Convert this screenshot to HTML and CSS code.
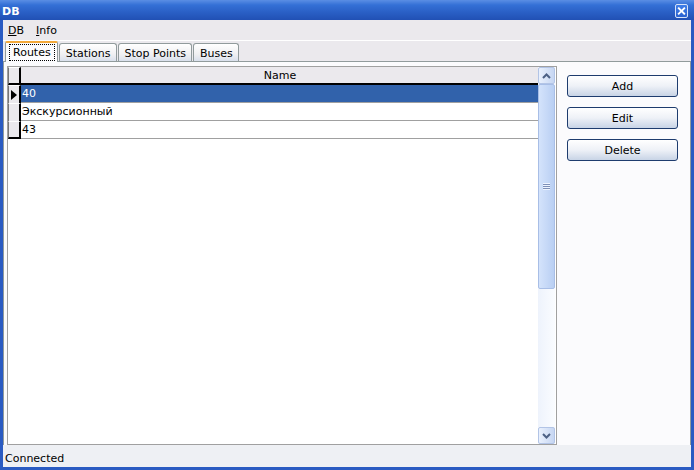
FILE: index.html
```html
<!DOCTYPE html>
<html lang="ru">
<head>
    <meta charset="UTF-8">
    <title>DB</title>
    <link rel="stylesheet" href="styles.css">
</head>
<body>
<div class="window">
    <div class="titlebar">
        <span class="title">DB</span>
        <span class="close">
            <svg width="12" height="12" viewBox="0 0 12 12">
                <path d="M3 3 L9 9 M9 3 L3 9" stroke="#fff" stroke-width="2" stroke-linecap="square"/>
            </svg>
        </span>
    </div>
    <div class="client">
        <div class="menu">
            <span class="menu-item"><u>D</u>B</span>
            <span class="menu-item"><u>I</u>nfo</span>
        </div>
        <div class="tabs">
            <div class="tab active"><span class="focus">Routes</span></div>
            <div class="tab">Stations</div>
            <div class="tab">Stop Points</div>
            <div class="tab">Buses</div>
        </div>
        <div class="panel">
            <div class="grid">
                <div class="grid-main">
                    <div class="row head">
                        <div class="rowhdr"></div>
                        <div class="cell name-col">Name</div>
                    </div>
                    <div class="row selected">
                        <div class="rowhdr"><span class="pointer"></span></div>
                        <div class="cell">40</div>
                    </div>
                    <div class="row">
                        <div class="rowhdr"></div>
                        <div class="cell">Экскурсионный</div>
                    </div>
                    <div class="row last">
                        <div class="rowhdr"></div>
                        <div class="cell">43</div>
                    </div>
                </div>
                <div class="vscroll">
                    <div class="sbtn">
                        <svg width="9" height="6" viewBox="0 0 9 6"><path d="M1 5 L4.5 1.5 L8 5" stroke="#4d6185" stroke-width="2" fill="none"/></svg>
                    </div>
                    <div class="track">
                        <div class="thumb"><span class="grip"></span></div>
                    </div>
                    <div class="sbtn">
                        <svg width="9" height="6" viewBox="0 0 9 6"><path d="M1 1 L4.5 4.5 L8 1" stroke="#4d6185" stroke-width="2" fill="none"/></svg>
                    </div>
                </div>
            </div>
            <div class="actions">
                <button class="btn">Add</button>
                <button class="btn">Edit</button>
                <button class="btn">Delete</button>
            </div>
        </div>
        <div class="status">Connected</div>
    </div>
</div>
</body>
</html>
```

FILE: styles.css
```css
body {
    margin: 0;
    font-family: "DejaVu Sans", Verdana, sans-serif;
    font-size: 11px;
    color: #000;
}

.window {
    width: 694px;
    height: 470px;
    display: flex;
    flex-direction: column;
    background: #2a5bc2;
}

/* Заголовок окна */
.titlebar {
    height: 20px;
    display: flex;
    align-items: center;
    justify-content: space-between;
    padding: 0 6px 0 2px;
    background: linear-gradient(#5a8ee4 0%, #3470d6 25%, #2a60c6 60%, #2150b4 100%);
}

.title {
    color: #fff;
    font-weight: bold;
    font-size: 11px;
    margin-top: 2px;
}

.close {
    width: 11px;
    height: 12px;
    display: flex;
    align-items: center;
    justify-content: center;
    border: 1px solid #d6e2f8;
    border-radius: 2px;
    background: linear-gradient(#3f7ee8, #2a62d0);
    margin-top: 1px;
}

.client {
    flex: 1;
    display: flex;
    flex-direction: column;
    margin: 0 3px 3px 3px;
    background: #ebe9ed;
}

/* Меню */
.menu {
    height: 20px;
    display: flex;
    align-items: center;
    gap: 12px;
    padding-left: 5px;
    border-bottom: 1px solid #fff;
}

/* Вкладки */
.tabs {
    height: 20px;
    display: flex;
    align-items: flex-end;
    padding-left: 2px;
}

.tab {
    padding: 1px 5px 0 6px;
    box-sizing: border-box;
    height: 18px;
    display: flex;
    align-items: center;
    border: 1px solid #919b9c;
    border-bottom: none;
    border-radius: 3px 3px 0 0;
    background: linear-gradient(#fff, #f0f0f2 60%, #d9e0ec);
    margin-right: 1px;
}

.tab.active {
    height: 21px;
    padding: 0 2px 0 3px;
    margin-bottom: -1px;
    position: relative;
    background: #fcfcfe;
    border-top: 2px solid #f3a93a;
    border-radius: 2px 2px 0 0;
}

.focus {
    border: 1px dotted #000;
    padding: 1px 3px;
}

/* Страница вкладки */
.panel {
    display: flex;
    background: #fbfbfd;
    border: 1px solid #919b9c;
    border-bottom: none;
    padding: 4px 0 0 3px;
    box-sizing: border-box;
    height: 384px;
}

.grid {
    width: 550px;
    height: 379px;
    box-sizing: border-box;
    border: 1px solid #a0a0a0;
    display: flex;
    background: #fff;
}

.grid-main {
    flex: 1;
}

.row {
    display: flex;
    height: 18px;
}

.rowhdr {
    width: 13px;
    background: #ebe9ed;
    border-right: 2px solid #000;
    border-top: 1px solid #fff;
    border-left: 1px solid #777;
    box-sizing: border-box;
    display: flex;
    align-items: center;
}

.row.last .rowhdr {
    border-bottom: 2px solid #000;
}

.cell {
    flex: 1;
    display: flex;
    align-items: center;
    padding-left: 1px;
    border-bottom: 1px solid #a0a0a0;
}

.row.head .cell {
    background: #ebe9ed;
    justify-content: center;
    border-bottom: 2px solid #000;
}

.row.head .rowhdr {
    border-bottom: 2px solid #000;
}

.row.selected .cell {
    background: #3162ab;
    color: #fff;
}

.pointer {
    width: 0;
    height: 0;
    border-top: 5px solid transparent;
    border-bottom: 5px solid transparent;
    border-left: 6px solid #000;
    margin-left: 2px;
}

/* Полоса прокрутки */
.vscroll {
    width: 17px;
    display: flex;
    flex-direction: column;
    background: #f3f6fd;
    margin-right: 1px;
}

.sbtn {
    height: 17px;
    box-sizing: border-box;
    border: 1px solid #b2c4e6;
    border-radius: 2px;
    background: linear-gradient(90deg, #eaf1fd, #c6d6f2);
    display: flex;
    align-items: center;
    justify-content: center;
}

.track {
    flex: 1;
    background: linear-gradient(90deg, #eef3fc, #fafcff);
}

.thumb {
    height: 205px;
    box-sizing: border-box;
    border: 1px solid #a8bee6;
    border-radius: 2px;
    background: linear-gradient(90deg, #d4e3fb, #b9cff3);
    display: flex;
    align-items: center;
    justify-content: center;
}

.grip {
    width: 7px;
    height: 7px;
    background: repeating-linear-gradient(#eef4ff 0 1px, #7d90b8 1px 2px);
}

/* Кнопки */
.actions {
    flex: 1;
    display: flex;
    flex-direction: column;
    gap: 10px;
    padding: 9px 0 0 10px;
}

.btn {
    width: 111px;
    height: 22px;
    font-family: "DejaVu Sans", Verdana, sans-serif;
    font-size: 11px;
    color: #000;
    border: 1px solid #1e3c6e;
    border-radius: 3px;
    background: linear-gradient(#ffffff, #eef1f7 50%, #c8d4e6);
    padding: 0;
}

/* Строка состояния */
.status {
    flex: 1;
    display: flex;
    align-items: center;
    padding: 5px 0 0 2px;
    background: #eef0f4;
}
```
